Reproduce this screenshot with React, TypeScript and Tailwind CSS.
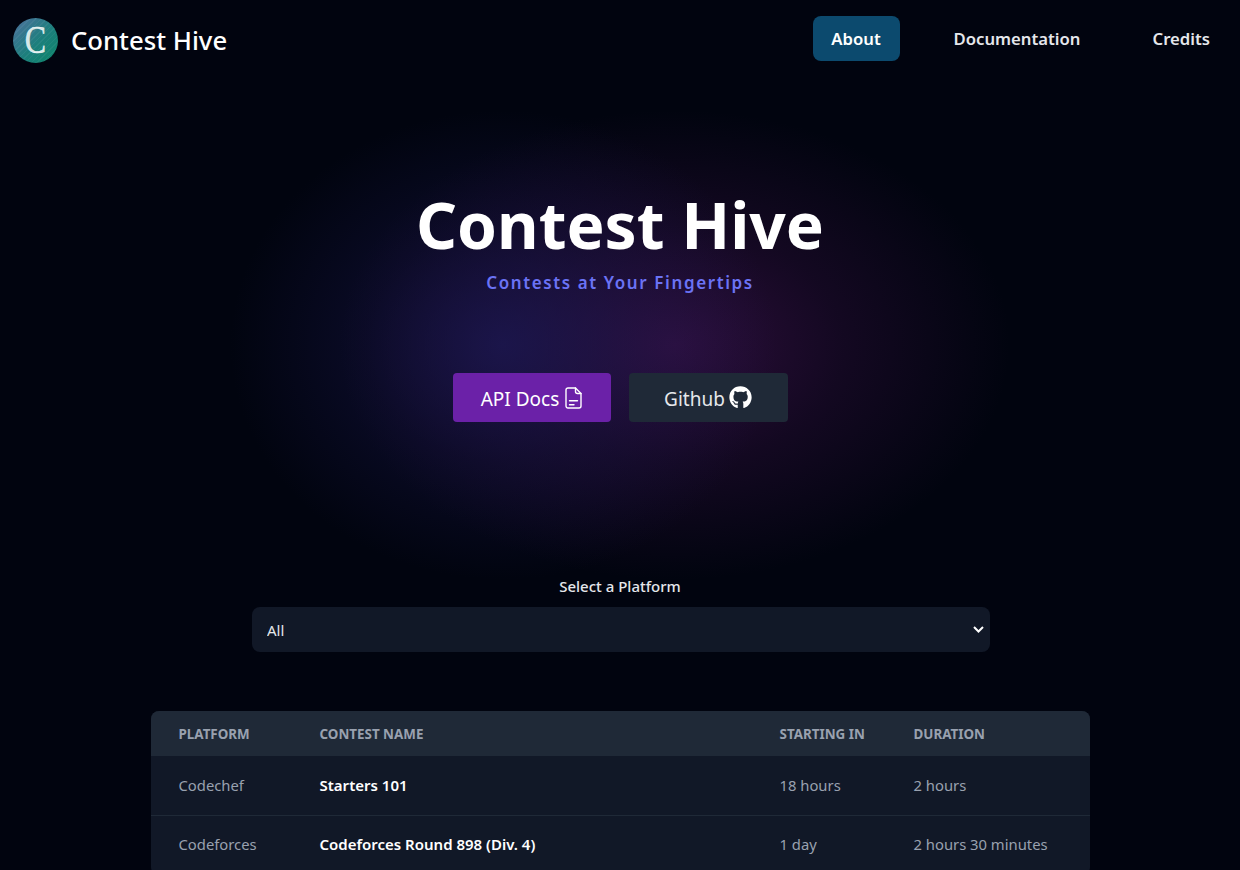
import { FaGithub } from 'react-icons/fa';

const contests = [
  { platform: 'Codechef', name: 'Starters 101', start: '18 hours', duration: '2 hours' },
  { platform: 'Codeforces', name: 'Codeforces Round 898 (Div. 4)', start: '1 day', duration: '2 hours 30 minutes' },
];

const Logo = () => (
  <div className="w-[45px] h-[45px] rounded-full bg-[repeating-linear-gradient(135deg,rgba(255,255,255,0.05)_0_1px,transparent_1px_4px),linear-gradient(135deg,#4f6f9f,#1c7f7c_55%,#0b8568)] flex items-center justify-center">
    <span className="text-[40px] leading-[40px] scale-x-[0.8] text-[#d5e8e8] [-webkit-text-stroke:0.4px_white] font-['Liberation_Serif',serif]">C</span>
  </div>
);

const DocIcon = () => (
  <svg width="17" height="22" viewBox="0 0 17 22" fill="none" stroke="currentColor" strokeWidth="1.4" strokeLinecap="round" strokeLinejoin="round">
    <path d="M3 1h7.5L16 6.5V19a2 2 0 0 1-2 2H3a2 2 0 0 1-2-2V3a2 2 0 0 1 2-2z" />
    <path d="M10.5 1v3.5a2 2 0 0 0 2 2H16" />
    <path d="M4.5 13.7h8" />
    <path d="M4.5 17.7h4.5" />
  </svg>
);

const App = () => {
  return (
    <div className="relative h-screen overflow-hidden bg-[#01040f] text-white font-['Noto_Sans',sans-serif]">
      {/* glow behind the hero */}
      <div className="absolute left-[230px] top-[110px] w-[780px] h-[470px] bg-[radial-gradient(ellipse_closest-side_at_35%_50%,rgba(30,26,90,0.72),rgba(30,26,90,0.3)_50%,transparent),radial-gradient(ellipse_closest-side_at_57%_50%,rgba(62,18,76,0.72),rgba(62,18,76,0.3)_50%,transparent)]"></div>

      <div className="relative">
        <nav className="flex items-center justify-between h-[77px] pl-[13px] pr-[12px]">
          <div className="flex items-center gap-[13px] pt-[3px]">
            <Logo />
            <span className="pt-[2px] text-[25.7px] font-medium">Contest Hive</span>
          </div>
          <div className="flex items-center gap-[36px]">
            <a className="w-[87px] h-[45px] flex items-center justify-center rounded-lg bg-[#0c4a6e] text-[16.7px] font-semibold">About</a>
            <a className="px-[18px] text-[16.7px] font-semibold text-gray-200">Documentation</a>
            <a className="px-[18px] text-[16.7px] font-semibold text-gray-200">Credits</a>
          </div>
        </nav>

        <section className="flex flex-col items-center pt-[101px]">
          <h1 className="text-[64px] leading-[94px] font-bold">Contest Hive</h1>
          <p className="text-[17px] leading-6 font-semibold tracking-[1.6px] text-[#6b73f5] -mt-[1px]">Contests at Your Fingertips</p>
          <div className="flex gap-[18px] mt-[78px]">
            <a className="w-[158px] h-[49px] flex items-center justify-center gap-[6px] rounded bg-[#6b21a8] text-[19px]">
              <span className="pt-[3px]">API Docs</span>
              <DocIcon />
            </a>
            <a className="w-[159px] h-[49px] flex items-center justify-center gap-1 rounded bg-[#1f2937] text-[19px] text-gray-200">
              <span className="pt-[3px]">Github</span>
              <FaGithub size={23} className="text-white" />
            </a>
          </div>
        </section>

        <section className="flex flex-col items-center mt-[154px]">
          <label className="text-[15px] leading-5 font-medium text-gray-200">Select a Platform</label>
          <div className="relative mt-[11px] ml-[2px]">
            <select className="appearance-none w-[738px] h-[45px] px-[15px] pt-[2px] rounded-lg bg-[#111827] text-[15px] text-gray-200">
              <option>All</option>
            </select>
            <svg className="absolute right-[6px] top-[19px] w-[11px] h-[7px] text-white" viewBox="0 0 11 7" fill="none" stroke="currentColor" strokeWidth="2">
              <path d="M1 1l4.5 4.5L10 1" />
            </svg>
          </div>
        </section>

        <div className="mx-auto mt-[59px] w-[939px] rounded-lg overflow-hidden bg-[#111827] text-[14.8px]">
          <table className="w-full table-fixed text-left">
            <thead className="bg-[#1f2937] text-gray-400 text-[13.4px] uppercase">
              <tr className="h-[45px]">
                <th className="w-[141px] pl-[28px] pt-[2px] font-bold">Platform</th>
                <th className="w-[460px] pl-[28px] pt-[2px] font-bold">Contest Name</th>
                <th className="w-[134px] pl-[28px] pt-[2px] font-bold">Starting In</th>
                <th className="pl-[28px] pt-[2px] font-bold">Duration</th>
              </tr>
            </thead>
            <tbody>
              {contests.map((c) => (
                <tr key={c.name} className="h-[59px] border-b border-[#1f2937] text-gray-400">
                  <td className="pl-[28px]">{c.platform}</td>
                  <td className="pl-[28px] text-[15px] font-semibold text-white">{c.name}</td>
                  <td className="pl-[28px]">{c.start}</td>
                  <td className="pl-[28px]">{c.duration}</td>
                </tr>
              ))}
            </tbody>
          </table>
        </div>
      </div>
    </div>
  );
};

export default App;
